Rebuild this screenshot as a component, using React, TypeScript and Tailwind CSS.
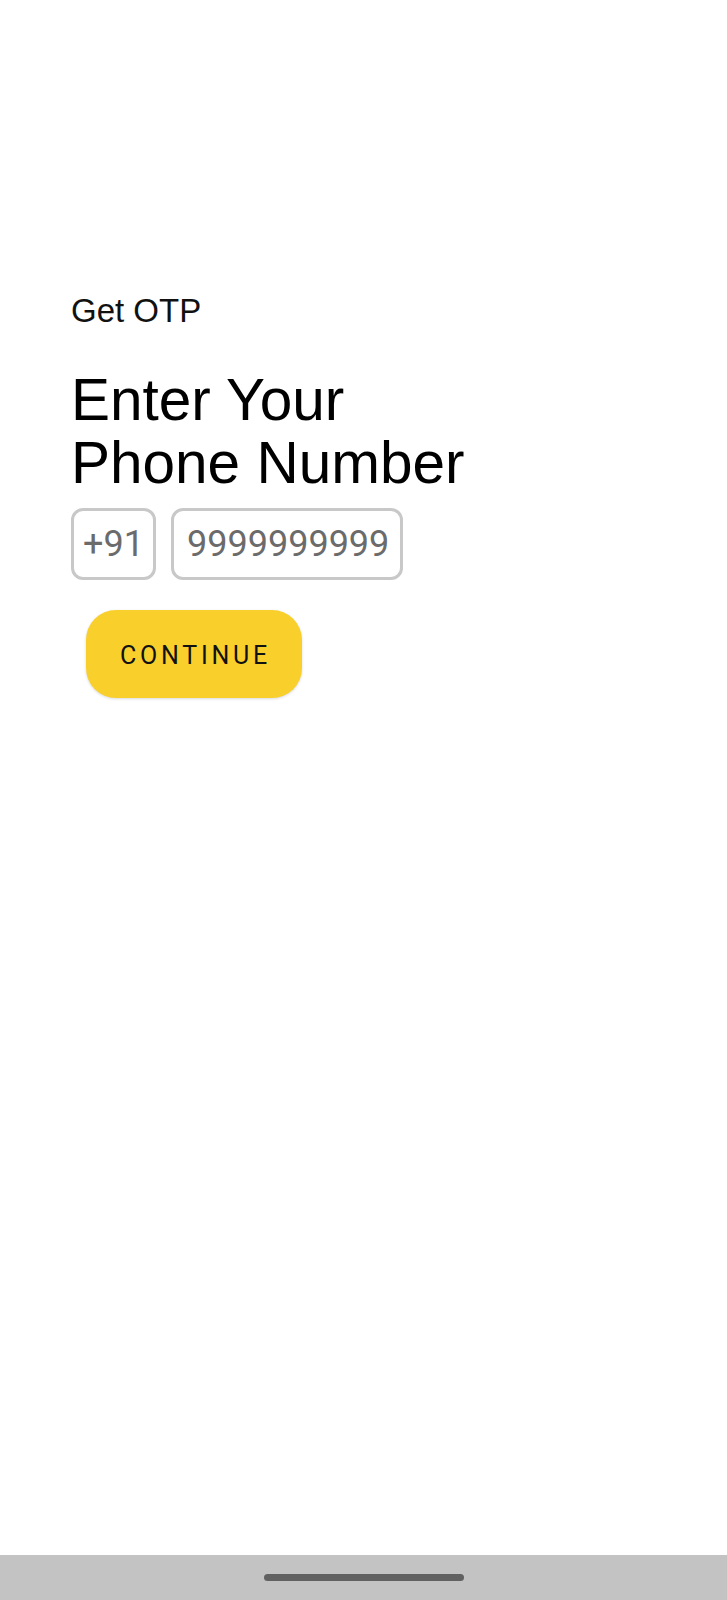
export default function App() {
  return (
    <div className="flex flex-col min-h-[1600px] h-[1600px] bg-white">
      <div className="flex-1 pt-[293px] pl-[71px]">
        <p className="font-['Liberation_Sans',Arial,sans-serif] text-[33px] leading-[36px] text-[#111]">
          Get OTP
        </p>
        <h1 className="mt-[39px] font-['Liberation_Sans',Arial,sans-serif] text-[58.5px] leading-[63px] text-black">
          Enter Your
          <br />
          Phone Number
        </h1>
        <div className="mt-[14px] flex gap-[15px] font-['Roboto',sans-serif] text-[36px] text-[#6b6b6b]">
          <div className="w-[85px] h-[72px] flex items-center justify-center border-[3px] border-[#c8c8c8] rounded-[12px]">
            +91
          </div>
          <div className="w-[232px] h-[72px] flex items-center px-[13px] border-[3px] border-[#c8c8c8] rounded-[12px] overflow-hidden whitespace-nowrap">
            9999999999
          </div>
        </div>
        <button className="mt-[30px] ml-[15px] w-[216px] h-[88px] pt-[3px] pl-[3px] rounded-[30px] bg-[#f9cf2b] shadow-[0_1px_3px_rgba(0,0,0,0.15)] font-['Roboto',sans-serif] font-normal text-[25px] tracking-[0.15em] text-[#111]">
          CONTINUE
        </button>
      </div>
      <div className="h-[45px] bg-[#c3c3c3] flex items-center justify-center">
        <div className="w-[200px] h-[7px] rounded-full bg-[#616161]" />
      </div>
    </div>
  );
}
